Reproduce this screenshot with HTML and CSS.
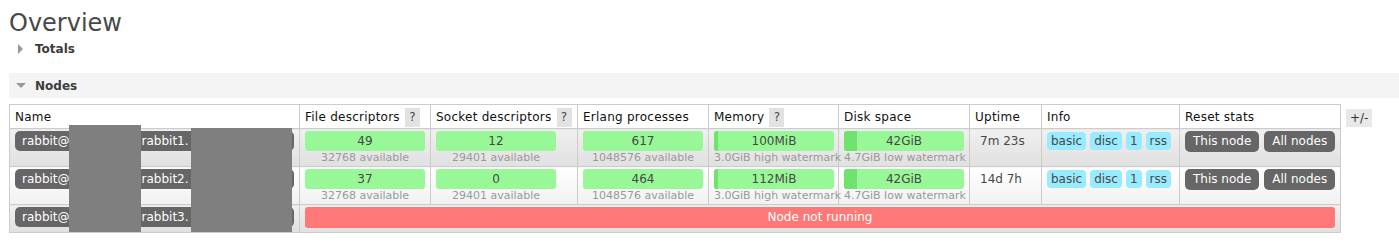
FILE: index.html
```html
<!DOCTYPE html>
<html lang="en">
<head>
    <meta charset="UTF-8">
    <meta name="viewport" content="width=device-width, initial-scale=1.0">
    <title>Overview</title>
    <link rel="stylesheet" href="styles.css">
</head>
<body>

    <h1>Overview</h1>

    <div class="section-title totals">
        <span class="arrow-right"></span>
        <span>Totals</span>
    </div>

    <div class="section-title nodes">
        <span class="arrow-down"></span>
        <span>Nodes</span>
    </div>

    <div class="hider">
        <div class="table-wrap">
            <table class="list">
                <colgroup>
                    <col class="c-name">
                    <col class="c-fd">
                    <col class="c-sock">
                    <col class="c-proc">
                    <col class="c-mem">
                    <col class="c-disk">
                    <col class="c-up">
                    <col class="c-info">
                    <col class="c-reset">
                </colgroup>
                <thead>
                    <tr>
                        <th>Name</th>
                        <th>File descriptors <span class="help">?</span></th>
                        <th>Socket descriptors <span class="help">?</span></th>
                        <th>Erlang processes</th>
                        <th>Memory <span class="help">?</span></th>
                        <th>Disk space</th>
                        <th>Uptime</th>
                        <th>Info</th>
                        <th>Reset stats</th>
                    </tr>
                </thead>
                <tbody>
                    <tr class="alt1">
                        <td><span class="node-name">rabbit@<span class="gap-a"></span>rabbit1.</span></td>
                        <td><div class="bar">49</div><div class="sub">32768 available</div></td>
                        <td><div class="bar">12</div><div class="sub">29401 available</div></td>
                        <td><div class="bar">617</div><div class="sub">1048576 available</div></td>
                        <td><div class="bar"><span class="used" style="width:4px"></span><span class="val">100MiB</span></div><div class="sub">3.0GiB high watermark</div></td>
                        <td><div class="bar"><span class="used" style="width:13px"></span><span class="val">42GiB</span></div><div class="sub">4.7GiB low watermark</div></td>
                        <td class="uptime">7m 23s</td>
                        <td><div class="tags"><span class="tag">basic</span><span class="tag">disc</span><span class="tag">1</span><span class="tag">rss</span></div></td>
                        <td><div class="buttons"><span class="btn">This node</span><span class="btn">All nodes</span></div></td>
                    </tr>
                    <tr class="alt2">
                        <td><span class="node-name">rabbit@<span class="gap-a"></span>rabbit2.</span></td>
                        <td><div class="bar">37</div><div class="sub">32768 available</div></td>
                        <td><div class="bar">0</div><div class="sub">29401 available</div></td>
                        <td><div class="bar">464</div><div class="sub">1048576 available</div></td>
                        <td><div class="bar"><span class="used" style="width:4px"></span><span class="val">112MiB</span></div><div class="sub">3.0GiB high watermark</div></td>
                        <td><div class="bar"><span class="used" style="width:13px"></span><span class="val">42GiB</span></div><div class="sub">4.7GiB low watermark</div></td>
                        <td class="uptime">14d 7h</td>
                        <td><div class="tags"><span class="tag">basic</span><span class="tag">disc</span><span class="tag">1</span><span class="tag">rss</span></div></td>
                        <td><div class="buttons"><span class="btn">This node</span><span class="btn">All nodes</span></div></td>
                    </tr>
                    <tr class="alt1 last">
                        <td><span class="node-name">rabbit@<span class="gap-a"></span>rabbit3.</span></td>
                        <td colspan="8"><div class="down">Node not running</div></td>
                    </tr>
                </tbody>
            </table>
            <!-- hostnames blanked out -->
            <div class="redact redact-a"></div>
            <div class="redact redact-b"></div>
        </div>
        <span class="toggle">+/-</span>
    </div>

</body>
</html>
```

FILE: styles.css
```css
body {
    margin: 0;
    padding: 0 0 0 9px;
    font-family: "DejaVu Sans", Verdana, sans-serif;
    font-size: 12px;
    color: #484848;
    background: #fff;
}

h1 {
    font-size: 24px;
    font-weight: normal;
    line-height: 28px;
    margin: 9px 0 0;
    color: #484848;
}

.section-title {
    display: flex;
    align-items: center;
    font-weight: bold;
    font-size: 12px;
    color: #3c3c3c;
}

.totals {
    margin-top: 4px;
    height: 16px;
    padding-left: 9px;
    gap: 12px;
}

.nodes {
    margin-top: 16px;
    height: 25px;
    padding-left: 7px;
    gap: 9px;
    background: #f4f4f4;
}

.arrow-right {
    width: 0;
    height: 0;
    border-top: 5px solid transparent;
    border-bottom: 5px solid transparent;
    border-left: 5px solid #999;
}

.arrow-down {
    width: 0;
    height: 0;
    border-left: 5px solid transparent;
    border-right: 5px solid transparent;
    border-top: 5px solid #999;
}

.hider {
    display: flex;
    align-items: flex-start;
    gap: 5px;
    margin-top: 6px;
}

.table-wrap {
    position: relative;
}

.list {
    border-collapse: collapse;
    table-layout: fixed;
    width: 1332px;
}

.c-name { width: 290px; }
.c-fd { width: 131px; }
.c-sock { width: 147px; }
.c-proc { width: 131px; }
.c-mem { width: 130px; }
.c-disk { width: 131px; }
.c-up { width: 72px; }
.c-info { width: 138px; }
.c-reset { width: 161px; }

.list th {
    text-align: left;
    font-weight: normal;
    color: #111;
    border: 1px solid #ccc;
    padding: 3px 5px 1px;
    height: 19px;
    line-height: 19px;
    letter-spacing: 0.25px;
    white-space: nowrap;
    background: #fff;
}

.help {
    display: inline-block;
    width: 15px;
    height: 19px;
    line-height: 19px;
    text-align: center;
    background: #e2e2e2;
    color: #484848;
    letter-spacing: 0;
    margin-left: 1px;
    vertical-align: top;
}

.list td {
    border: 1px solid #ccc;
    padding: 2px 5px;
    vertical-align: top;
}

.alt1 td {
    background: linear-gradient(#f0f0f0, #e0e0e0);
}

.alt2 td {
    background: linear-gradient(#ffffff, #f1f1f1);
}

.last td {
    padding-bottom: 4px;
}

.node-name {
    display: block;
    height: 20px;
    line-height: 20px;
    padding: 0 7px;
    background: #666;
    color: #fff;
    border-radius: 5px;
    white-space: nowrap;
}

.gap-a {
    display: inline-block;
    width: 72px;
}

.bar {
    position: relative;
    width: 120px;
    height: 20px;
    line-height: 20px;
    background: #98f898;
    border-radius: 3px;
    text-align: center;
    color: #484848;
    overflow: hidden;
}

.used {
    position: absolute;
    left: 0;
    top: 0;
    bottom: 0;
    background: #6ee36e;
}

.val {
    position: relative;
}

.sub {
    width: 120px;
    font-size: 11px;
    line-height: 13px;
    color: #999;
    text-align: center;
    white-space: nowrap;
}

.list td.uptime {
    padding-left: 10px;
    line-height: 20px;
}

.tags {
    display: flex;
    gap: 4px;
    padding-top: 1px;
}

.tag {
    background: #99ebff;
    border-radius: 4px;
    padding: 0 4px;
    line-height: 18px;
    color: #484848;
}

.buttons {
    display: flex;
    gap: 5px;
}

.btn {
    background: #666;
    color: #fff;
    border-radius: 5px;
    padding: 0 8px;
    height: 21px;
    line-height: 21px;
    white-space: nowrap;
}

.down {
    height: 21px;
    line-height: 21px;
    background: #ff7878;
    color: #fff;
    text-align: center;
    border-radius: 3px;
}

.redact {
    position: absolute;
    background: #7f7f7f;
}

.redact-a {
    left: 60px;
    top: 21px;
    width: 72px;
    height: 107px;
}

.redact-b {
    left: 182px;
    top: 24px;
    width: 101px;
    height: 104px;
}

.toggle {
    margin-top: 5px;
    padding: 0 4px;
    line-height: 18px;
    background: #e8e8e8;
    color: #333;
}
```
